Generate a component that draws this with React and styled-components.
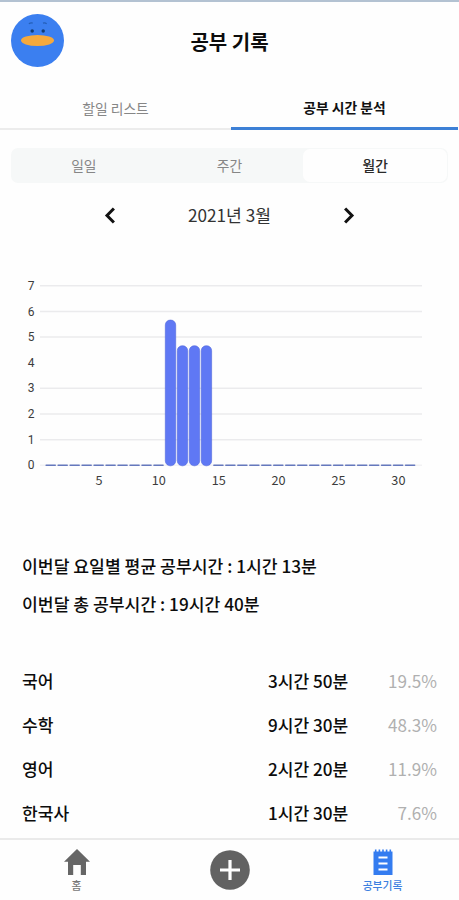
import React, { useState } from 'react';
import styled, { createGlobalStyle } from 'styled-components';

const tabs = ['할일 리스트', '공부 시간 분석'];
const periods = ['일일', '주간', '월간'];

const subjects = [
    { name: '국어', time: '3시간 50분', percent: '19.5%' },
    { name: '수학', time: '9시간 30분', percent: '48.3%' },
    { name: '영어', time: '2시간 20분', percent: '11.9%' },
    { name: '한국사', time: '1시간 30분', percent: '7.6%' },
];

// hours studied on each day of the month
const studied = { 11: 5.67, 12: 4.67, 13: 4.67, 14: 4.67 };
const days = Array.from({ length: 31 }, (_, i) => i + 1);

const baseY = 190;
const hourHeight = 25.65;
const dayX = (day) => 50.6 + (day - 1) * 11.98;
const hourY = (hour) => baseY - hour * hourHeight;

const MonthChart = () => (
    <Chart viewBox='0 0 459 265' width='459' height='265'>
        {[7, 6, 5, 4, 3, 2, 1, 0].map((hour) => (
            <g key={hour}>
                {hour !== 4 && (
                    <line className={hour ? 'grid' : 'grid base'} x1='40' x2='422' y1={hourY(hour) + 0.3} y2={hourY(hour) + 0.3} />
                )}
                <text className='hour' x='31' y={hourY(hour) + 4.4}>{hour}</text>
            </g>
        ))}
        {days.map((day) =>
            studied[day] ? (
                <rect
                    key={day}
                    className='bar'
                    x={dayX(day) - 5.1}
                    y={hourY(studied[day]) + 0.5}
                    width='10.4'
                    height={studied[day] * hourHeight + 0.3}
                    rx='5'
                />
            ) : (
                <rect key={day} className='empty' x={dayX(day) - 5.2} y={baseY - 0.4} width='10.6' height='1.4' rx='0.7' />
            )
        )}
        {[5, 10, 15, 20, 25, 30].map((day) => (
            <text key={day} className='day' x={dayX(day) + 0.4} y='210'>{day}</text>
        ))}
    </Chart>
);

const Duck = () => (
    <Avatar viewBox='0 0 52 52'>
        <circle cx='26' cy='26' r='26' fill='#3b7ff0' />
        <path d='M17.5 9.5q2-1.3 3.8-.6M31.4 8.9q2-.7 3.6.6' stroke='#245fb8' strokeWidth='1.2' fill='none' />
        <circle cx='20.8' cy='16.7' r='1.7' fill='#123c72' />
        <circle cx='31.6' cy='16.7' r='1.7' fill='#123c72' />
        <ellipse cx='26' cy='26' rx='16.2' ry='5.4' fill='#f5a93d' />
    </Avatar>
);

const App = () => {
    const [tab, setTab] = useState(1);
    const [period, setPeriod] = useState(2);

    return (
        <Page>
            <GlobalStyle />
            <Header>
                <Duck />
                <Title>공부 기록</Title>
            </Header>

            <Tabs>
                {tabs.map((name, i) => (
                    <Tab key={name} $active={tab === i} onClick={() => setTab(i)}>{name}</Tab>
                ))}
            </Tabs>

            <Segment>
                {periods.map((name, i) => (
                    <SegmentItem key={name} $active={period === i} onClick={() => setPeriod(i)}>{name}</SegmentItem>
                ))}
            </Segment>

            <MonthNav>
                <Arrow aria-label='이전 달'>
                    <svg width='12' height='17' viewBox='0 0 12 17'><path d='M9.9 1.5L3 8.5l6.9 7' /></svg>
                </Arrow>
                <Month>2021년 3월</Month>
                <Arrow aria-label='다음 달'>
                    <svg width='12' height='17' viewBox='0 0 12 17'><path d='M2.1 1.5L9 8.5l-6.9 7' /></svg>
                </Arrow>
            </MonthNav>

            <MonthChart />

            <Summary>
                <p>이번달 요일별 평균 공부시간 : 1시간 13분</p>
                <p>이번달 총 공부시간 : 19시간 40분</p>
            </Summary>

            <SubjectList>
                {subjects.map((subject) => (
                    <SubjectRow key={subject.name}>
                        <span>{subject.name}</span>
                        <span>{subject.time}</span>
                        <Percent>{subject.percent}</Percent>
                    </SubjectRow>
                ))}
            </SubjectList>

            <BottomNav>
                <NavItem>
                    <svg width='26' height='26' viewBox='0 0 26 26'>
                        <path d='M13 0L0 12.8h4V26h5.2V16h7.6v10H22V12.8h4z' fill='#666' />
                    </svg>
                    <span>홈</span>
                </NavItem>
                <AddButton aria-label='추가'>
                    <svg width='40' height='40' viewBox='0 0 40 40'>
                        <circle cx='20' cy='20' r='19.8' fill='#626262' />
                        <path d='M20 10v20M10 20h20' stroke='#fff' strokeWidth='3.2' />
                    </svg>
                </AddButton>
                <NavItem $active>
                    <svg width='20' height='26' viewBox='0 0 20 26'>
                        <path d='M.5 2.5h19V26H.5z' fill='#347cf0' />
                        <path d='M2.7 .5v4M6.4 .5v4M10 .5v4M13.6 .5v4M17.3 .5v4' stroke='#347cf0' strokeWidth='1.6' />
                        <path d='M5.5 8.5h9M5.5 14.5h9M5.5 20.5h9' stroke='#fff' strokeWidth='1.8' />
                    </svg>
                    <span>공부기록</span>
                </NavItem>
            </BottomNav>
        </Page>
    );
};

const GlobalStyle = createGlobalStyle`
    * {
        box-sizing: border-box;
        margin: 0;
        padding: 0;
    }

    body {
        background: #fefefe;
        color: #0c0c0c;
        font-family: 'Noto Sans CJK KR', sans-serif;
        overflow: hidden;
    }

    button {
        border: 0;
        background: none;
        font-family: inherit;
        cursor: pointer;
    }
`;

const Page = styled.div`
    display: flex;
    flex-direction: column;
    width: 459px;
    height: 900px;
    border-top: 2px solid #b3c2d2;
    background: #fefefe;
`;

const Header = styled.header`
    display: grid;
    grid-template-columns: 64px 1fr 64px;
    align-items: center;
    height: 77px;
    flex-shrink: 0;
`;

const Avatar = styled.svg`
    width: 53px;
    height: 53px;
    margin: 0 0 1px 11px;
`;

const Title = styled.h1`
    font-size: 20px;
    font-weight: 700;
    line-height: 24px;
    text-align: center;
    padding-top: 2px;
`;

const Tabs = styled.nav`
    display: flex;
    height: 51px;
    padding-right: 1px;
    flex-shrink: 0;
`;

const Tab = styled.button`
    flex: ${({ $active }) => ($active ? '0 0 227px' : '1')};
    padding-top: 8px;
    border-bottom: ${({ $active }) => ($active ? '3.5px solid #3d80d6' : '2px solid #ececec')};
    color: ${({ $active }) => ($active ? '#111' : '#868686')};
    font-size: 13.8px;
    font-weight: ${({ $active }) => ($active ? 700 : 400)};
    line-height: 20px;
`;

const Segment = styled.div`
    display: flex;
    height: 35px;
    margin: 18px 11px 0;
    border-radius: 7px;
    background: #f6f8f8;
    flex-shrink: 0;
`;

const SegmentItem = styled.button`
    flex: 1;
    margin: 1px;
    padding-bottom: 1px;
    border-radius: 7px;
    background: ${({ $active }) => ($active ? '#fefefe' : 'transparent')};
    color: ${({ $active }) => ($active ? '#2a2a2a' : '#868686')};
    font-size: 13.8px;
    font-weight: ${({ $active }) => ($active ? 500 : 400)};
    line-height: 20px;
`;

const MonthNav = styled.div`
    display: flex;
    justify-content: space-between;
    align-items: center;
    width: 252px;
    height: 40px;
    margin: 12px auto 0;
    flex-shrink: 0;
`;

const Arrow = styled.button`
    display: flex;

    path {
        fill: none;
        stroke: #111;
        stroke-width: 3;
    }
`;

const Month = styled.span`
    color: #333;
    font-size: 17.2px;
    line-height: 24px;
`;

const Chart = styled.svg`
    margin-top: 40px;
    flex-shrink: 0;

    .grid {
        stroke: #ebebed;
        stroke-width: 1.5;
    }

    .base {
        stroke: #f2f2f4;
    }

    .bar {
        fill: #5f78f4;
        stroke: #5068dc;
        stroke-width: 0.6;
    }

    .empty {
        fill: #6578bd;
    }

    text {
        fill: #3c3c3c;
        text-anchor: middle;
    }

    .hour {
        font-family: Roboto, sans-serif;
        font-size: 12px;
    }

    .day {
        font-size: 12.7px;
    }
`;

const Summary = styled.section`
    display: flex;
    flex-direction: column;
    gap: 14px;
    padding: 14px 22px 0;
    font-size: 17.2px;
    font-weight: 500;
    line-height: 24px;
`;

const SubjectList = styled.ul`
    display: flex;
    flex-direction: column;
    margin-top: 43px;
    padding: 0 22px;
    list-style: none;
`;

const SubjectRow = styled.li`
    display: grid;
    grid-template-columns: 1fr 82px 87px;
    align-items: center;
    height: 44px;
    font-size: 17.1px;
    font-weight: 500;
    line-height: 24px;
`;

const Percent = styled.span`
    color: #b0b0b0;
    font-weight: 400;
    text-align: right;
`;

const BottomNav = styled.footer`
    display: grid;
    grid-template-columns: repeat(3, 1fr);
    height: 62px;
    margin-top: auto;
    border-top: 2px solid #eaeaea;
    flex-shrink: 0;
`;

const NavItem = styled.button`
    display: flex;
    flex-direction: column;
    align-items: center;
    padding-top: 9px;
    color: ${({ $active }) => ($active ? '#3d80e0' : '#777')};
    font-size: 10.8px;
    font-weight: 500;
    line-height: 20px;
`;

const AddButton = styled.button`
    display: flex;
    justify-content: center;
    padding-top: 10px;
`;

export default App;
